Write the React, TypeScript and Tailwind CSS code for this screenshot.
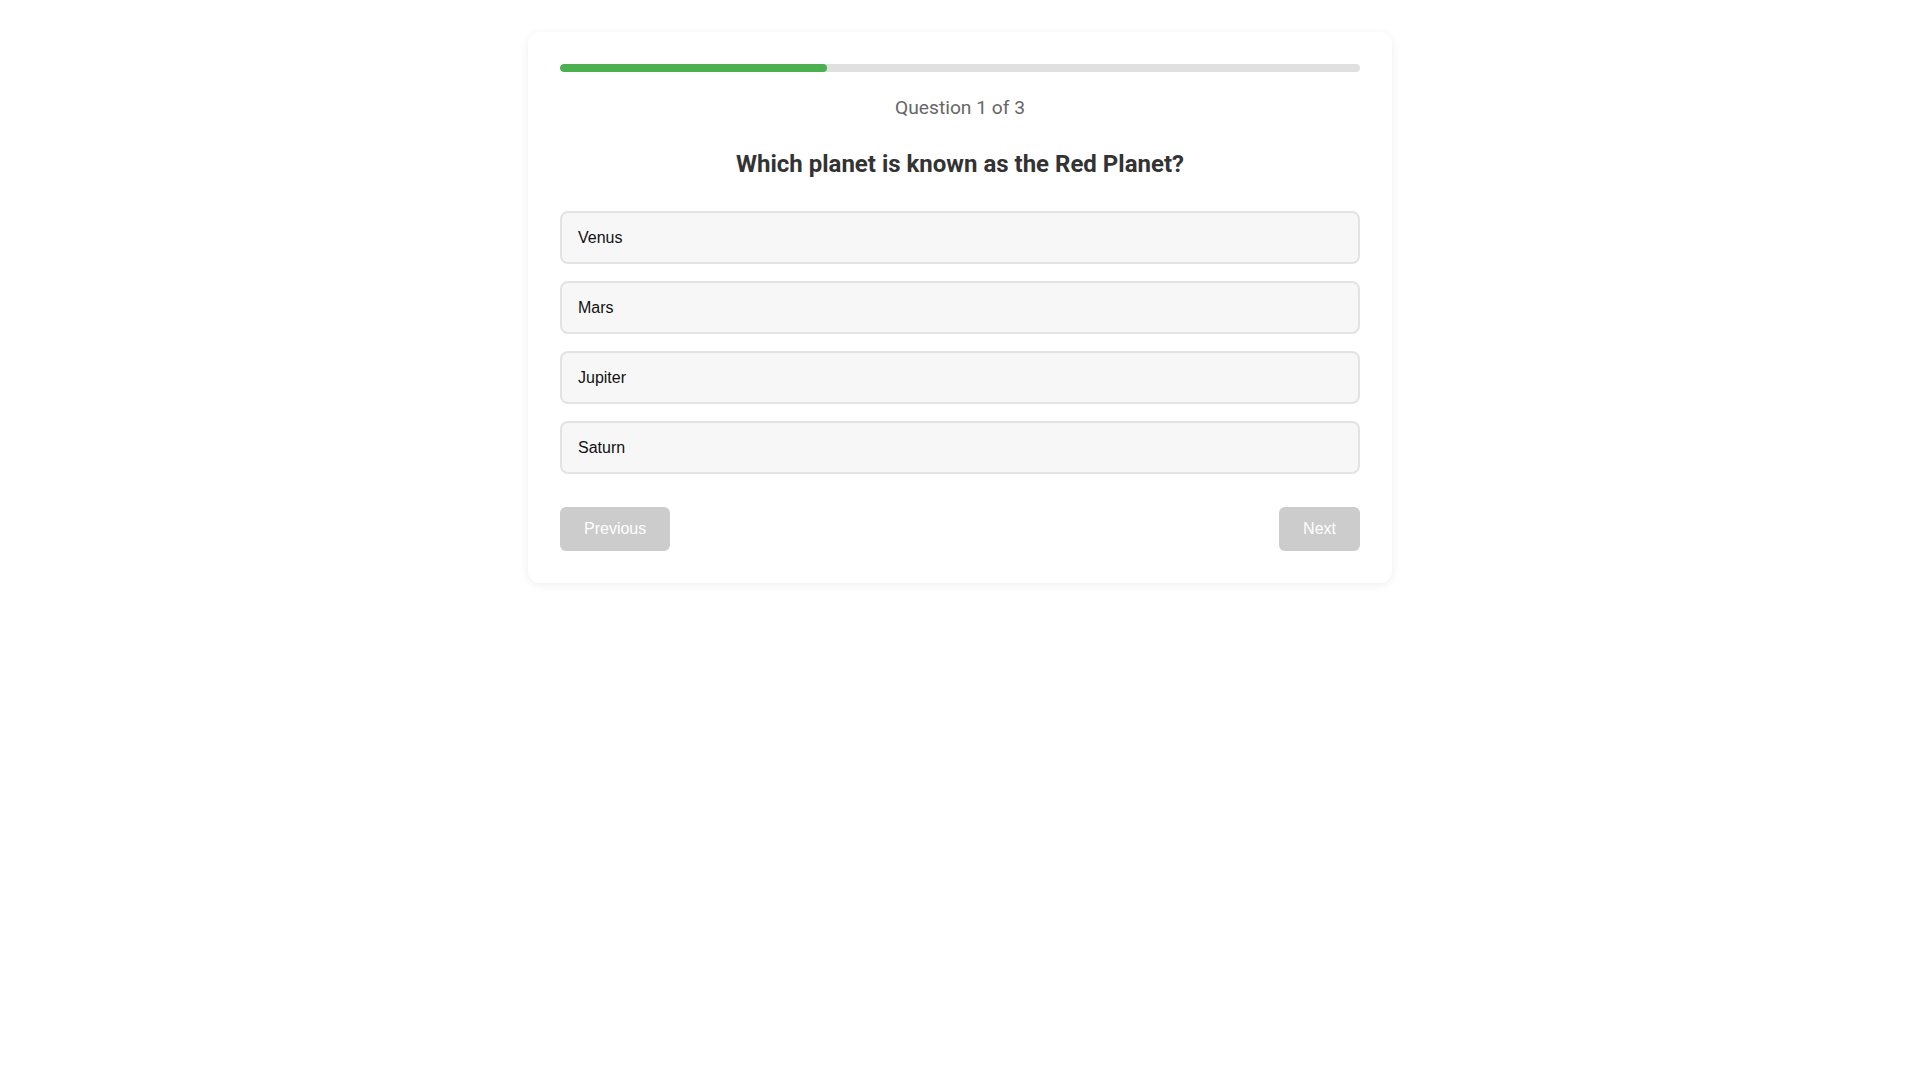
import { useState } from "react";

// ===== CONSTANTS =====
const ROBOTO = "font-['Roboto',sans-serif]";
const ARIAL = "font-['Liberation_Sans',Arial,sans-serif]";

const questions = [
  {
    text: "Which planet is known as the Red Planet?",
    options: ["Venus", "Mars", "Jupiter", "Saturn"],
  },
  {
    text: "What is the largest ocean on Earth?",
    options: ["Atlantic", "Indian", "Arctic", "Pacific"],
  },
  {
    text: "How many continents are there?",
    options: ["5", "6", "7", "8"],
  },
];

// ===== SUB-COMPONENTS =====
const OptionButton = ({
  label,
  selected,
  onClick,
}: {
  label: string;
  selected: boolean;
  onClick: () => void;
}) => (
  <button
    type="button"
    onClick={onClick}
    className={`block w-full rounded-lg border-2 px-4 py-[15px] text-left text-[16px] leading-[19px] text-[#111] ${ARIAL} ${
      selected ? "border-[#4caf50] bg-[#eef8ee]" : "border-[#e3e3e3] bg-[#f7f7f7]"
    }`}
  >
    {label}
  </button>
);

const NavButton = ({
  label,
  disabled,
  onClick,
}: {
  label: string;
  disabled: boolean;
  onClick: () => void;
}) => (
  <button
    type="button"
    disabled={disabled}
    onClick={onClick}
    className={`h-[44px] rounded-md px-6 text-[16px] leading-[20px] text-white ${ARIAL} ${
      disabled ? "bg-[#cccccc]" : "bg-[#4caf50]"
    }`}
  >
    {label}
  </button>
);

// ===== MAIN COMPONENT =====
export default function App() {
  const [current, setCurrent] = useState(0);
  const [answers, setAnswers] = useState<(number | null)[]>([null, null, null]);

  const question = questions[current];
  const progress = ((current + 1) / questions.length) * 100;

  const choose = (index: number) => {
    const next = [...answers];
    next[current] = index;
    setAnswers(next);
  };

  return (
    <div className="min-h-screen bg-white pt-8">
      <div className="mx-auto w-[864px] rounded-xl bg-white px-8 pb-8 pt-8 shadow-[0_2px_10px_rgba(0,0,0,0.07)]">
        {/* Progress Bar */}
        <div className="h-2 w-full overflow-hidden rounded-full bg-[#e0e0e0]">
          <div className="h-full rounded-full bg-[#4caf50]" style={{ width: `${progress}%` }} />
        </div>

        {/* Counter & Question */}
        <p className={`mt-[22px] text-center text-[19.2px] leading-[27px] text-[#666] ${ROBOTO}`}>
          Question {current + 1} of {questions.length}
        </p>
        <h2 className={`mt-[25px] text-center text-[24px] font-bold leading-[36px] text-[#333] ${ROBOTO}`}>
          {question.text}
        </h2>

        {/* Options */}
        <div className="mt-[29px] flex flex-col gap-[17px]">
          {question.options.map((option, i) => (
            <OptionButton
              key={option}
              label={option}
              selected={answers[current] === i}
              onClick={() => choose(i)}
            />
          ))}
        </div>

        {/* Navigation */}
        <div className="mt-[33px] flex items-center justify-between">
          <NavButton
            label="Previous"
            disabled={current === 0}
            onClick={() => setCurrent(current - 1)}
          />
          <NavButton
            label="Next"
            disabled={answers[current] === null}
            onClick={() => setCurrent(Math.min(current + 1, questions.length - 1))}
          />
        </div>
      </div>
    </div>
  );
}
